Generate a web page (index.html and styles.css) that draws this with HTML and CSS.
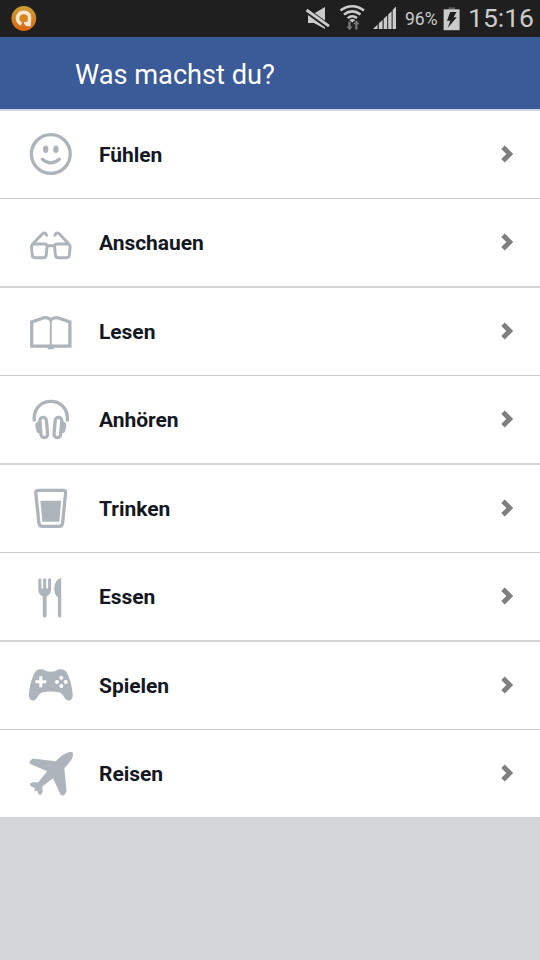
FILE: index.html
```html
<!DOCTYPE html>
<html lang="de">
<head>
<meta charset="utf-8">
<title>Was machst du?</title>
<link rel="stylesheet" href="styles.css">
</head>
<body>
<div class="status">
  <svg class="status-app" viewBox="0 0 48 37">
    <defs><linearGradient id="g" x1="0" y1="0" x2="0" y2="1"><stop offset="0" stop-color="#cca036"/><stop offset="1" stop-color="#d9660f"/></linearGradient></defs>
    <circle cx="23.8" cy="18.5" r="12.4" fill="url(#g)"/>
    <path d="M21.5 24C17.5 22.5 16.5 17.5 18.7 14.8C21 11.6 26.5 11.6 28.8 14.6C30.2 16.8 29.2 20 29.2 24.5C26.8 24.8 25.6 23.4 25.6 21.4" fill="none" stroke="#f5e6cf" stroke-width="3.6"/>
    <circle cx="23.8" cy="18.3" r="3.6" fill="#d7851f"/>
  </svg>
  <svg class="status-icons" viewBox="300 0 102 37">
    <g fill="#cbcbcb">
      <path d="M308 13.5H314L325 7V29L314 23H308Z"/>
      <path d="M306.5 10.5L328.5 26.5" stroke="#1f1f1f" stroke-width="5.4"/>
      <path d="M306.5 10L329 26.2" stroke="#cbcbcb" stroke-width="2.8"/>
      <path d="M373 29L377.5 24.5V29ZM378.8 23.3L382.6 20V29H378.8ZM383.7 18.8L387.2 15.5V29H383.7ZM388.2 14.4L391.6 11.2V29H388.2ZM392.6 10L396 6.5V29H392.6Z"/>
      <g fill="none" stroke="#cbcbcb" stroke-width="2.5"><path d="M340.5 10.4Q352.3 2.2 364 10.4M344 14.5Q352.3 8.2 360.5 14.5M347.7 18.1Q352.3 14.4 357 18.1"/></g>
      <path d="M349.5 19.9Q352.3 18 355.2 19.9L352.3 22.6Z"/>
      <path d="M348.3 21.5H350.7V26.5H352.8L349.5 30.3L346.5 26.5H348.3ZM355.2 29.5H357.5V24.2H359.6L356.4 20.3L353.2 24.2H355.2Z" fill="#777"/>
    </g>
  </svg>
  <span class="pct">96%</span>
  <svg class="battery" viewBox="440 0 24 37"><path d="M448.5 7.3H455V9.5H448.5Z" fill="#5c5c5c"/><path d="M443.6 9.3H459.6V30.2H443.6Z" fill="#cbcbcb"/><path d="M450.2 12H456.5L453.6 17.3H456.8L447.8 27.8L450.3 20.8H447Z" fill="#1f1f1f"/></svg>
  <span class="clock">15:16</span>
</div>
<header class="header"><h1>Was machst du?</h1></header>
<ul class="list">
  <li class="row"><svg class="icon" viewBox="0 111 99 87"><g class="line"><circle cx="50.8" cy="154" r="19.4"/><path d="M42.3 159.2Q50.8 166.5 59.3 159.2" stroke-linecap="round"/></g><ellipse cx="45.7" cy="149.3" rx="2.7" ry="3.8"/><ellipse cx="55.9" cy="149.3" rx="2.7" ry="3.8"/></svg><span>Fühlen</span><svg class="chev" viewBox="0 0 14 20"><path d="M3 3.2L9.8 10L3 16.8"/></svg></li>
  <li class="row"><svg class="icon" viewBox="0 199 99 87"><g class="line thin"><path d="M34.5 244H44.5Q47.3 244 47 247L46.3 254.5Q46 257.8 43 257.8H35.5Q32.4 257.8 32.1 254.5L31.5 247Q31.3 244 34.5 244ZM57.1 244H67.1Q70.3 244 70.1 247L69.5 254.5Q69.2 257.8 66.1 257.8H58.6Q55.6 257.8 55.3 254.5L54.6 247Q54.3 244 57.1 244ZM46.5 245.7H55M32 244.7L42.5 233.8Q44.3 232 45.8 233.6Q46.8 234.8 46.5 236.5M69.6 244.7L59.1 233.8Q57.3 232 55.8 233.6Q54.8 234.8 55.1 236.5"/></g></svg><span>Anschauen</span><svg class="chev" viewBox="0 0 14 20"><path d="M3 3.2L9.8 10L3 16.8"/></svg></li>
  <li class="row"><svg class="icon" viewBox="0 288 99 87"><g class="line"><path d="M31.7 346.2V322L41 318.7Q47.5 316.2 50.8 320Q54.1 316.2 60.6 318.7L69.9 322V346.2Z"/><path d="M50.8 320V347" stroke-width="2"/></g><path d="M46.8 347H54.8L53.5 349.3H48.1Z"/></svg><span>Lesen</span><svg class="chev" viewBox="0 0 14 20"><path d="M3 3.2L9.8 10L3 16.8"/></svg></li>
  <li class="row"><svg class="icon" viewBox="0 376 99 87"><g class="line"><path d="M34.2 421.5V417.5C35 396 66.6 396 67.4 417.5V421.5"/><rect x="40.4" y="417.4" width="6.6" height="20.3" rx="3.3" transform="rotate(-5 43.7 427.5)"/><rect x="54.6" y="417.4" width="6.6" height="20.3" rx="3.3" transform="rotate(5 57.9 427.5)"/></g><path d="M39.3 421.3L41 433.3H39Q36.7 433 36.2 430.5L35.3 425.2Q35.2 421.8 39.3 421.3ZM62.3 421.3L60.6 433.3H62.6Q64.9 433 65.4 430.5L66.3 425.2Q66.4 421.8 62.3 421.3Z"/></svg><span>Anhören</span><svg class="chev" viewBox="0 0 14 20"><path d="M3 3.2L9.8 10L3 16.8"/></svg></li>
  <li class="row"><svg class="icon" viewBox="0 465 99 87"><path class="line" d="M38 490.3H63.5Q65.9 490.3 65.6 493L62.6 523Q62.2 526.4 58.8 526.4H42.8Q39.3 526.4 38.9 523L35.8 493Q35.5 490.3 38 490.3Z"/><path d="M40.4 500.7H61.2L59.3 521.8H42.4Z"/></svg><span>Trinken</span><svg class="chev" viewBox="0 0 14 20"><path d="M3 3.2L9.8 10L3 16.8"/></svg></li>
  <li class="row"><svg class="icon" viewBox="0 553 99 87"><path d="M38.3 579.2Q39.8 577.2 41.3 579.2V588.5H43.2V579.2Q44.7 577.2 46.2 579.2V588.5H48.1V579.2Q49.6 577.2 51.1 579.2V589.5Q51 594 46.6 596.5V616Q44.7 619.3 42.8 616V596.5Q38.3 594 38.3 589.5ZM61.2 579V616Q59.6 619.3 57.9 616V597.3Q54.2 594.5 54.2 588.5Q54.3 579.5 61.2 578Z"/></svg><span>Essen</span><svg class="chev" viewBox="0 0 14 20"><path d="M3 3.2L9.8 10L3 16.8"/></svg></li>
  <li class="row"><svg class="icon" viewBox="0 642 99 87"><path d="M36.5 670.5C39.5 668.8 43 669 45.5 670.8Q50.8 672.5 56.1 670.8C58.6 669 62.1 668.8 65.1 670.5C69 674 72.8 688 72.7 696Q72 700.8 68 700.5C64.5 700 63.5 693.5 59 692.2Q50.8 690.8 42.6 692.2C38.1 693.5 37.1 700 33.6 700.5Q29.6 700.8 28.9 696C28.8 688 32.6 674 36.5 670.5Z"/><g fill="#fff"><path d="M39.3 676.3H42.3V680.3H46.3V683.3H42.3V687.3H39.3V683.3H35.3V680.3H39.3Z"/><circle cx="61.3" cy="677.8" r="2"/><circle cx="61.3" cy="686.1" r="2"/><circle cx="57" cy="682" r="2"/><circle cx="65.6" cy="682" r="2"/></g></svg><span>Spielen</span><svg class="chev" viewBox="0 0 14 20"><path d="M3 3.2L9.8 10L3 16.8"/></svg></li>
  <li class="row"><svg class="icon" viewBox="0 730 99 87"><path d="M72.3 752.3Q74 754.5 71.5 759.5Q69 763.5 64.3 768.3L66.6 791.5L64.3 795Q62 796.3 60.5 794.5L53 778.3L42.3 786.5L42.6 792L40.9 794.7L38.7 794.5L37.3 790.8L34.4 791.2L34.8 788.2L30.2 785.7L30.2 783.5L33 782.2L38 782.5L47.2 771.2L30.5 764Q28.7 762.7 30 761L32.6 758.4L55.8 761.2C61 755.5 68.3 750.5 72.3 752.3Z"/></svg><span>Reisen</span><svg class="chev" viewBox="0 0 14 20"><path d="M3 3.2L9.8 10L3 16.8"/></svg></li>
</ul>
</body>
</html>
```
FILE: styles.css
```css
* { box-sizing: border-box; }
body {
  margin: 0;
  min-height: 960px;
  background: #d2d6d9;
  font-family: Roboto, "Liberation Sans", sans-serif;
}
svg { display: block; flex: none; }
.status {
  display: flex;
  align-items: center;
  height: 37px;
  background: #1f1f1f;
  color: #cbcbcb;
}
.status-app { width: 48px; height: 37px; margin-right: auto; }
.status-icons { width: 102px; height: 37px; }
.pct { width: 38px; padding-left: 3px; font-size: 17.5px; line-height: 37px; padding-top: 1px; }
.battery { width: 24px; height: 37px; }
.clock { width: 76px; padding: 0 0 1px 4px; font-size: 26.5px; line-height: 36px; white-space: nowrap; }
.header {
  display: flex;
  align-items: center;
  height: 74px;
  padding: 3px 0 0 75px;
  background: #3a5a98;
  border-bottom: 2px solid #ced5e5;
}
.header h1 { margin: 0; color: #fff; font-size: 27.2px; font-weight: 400; white-space: nowrap; }
.list { margin: 0; padding: 0; list-style: none; background: #fff; }
.row {
  display: flex;
  align-items: center;
  height: 88px;
  padding-right: 26px;
  border-bottom: 1px solid #cbccce;
  color: #141823;
  font-size: 21px;
  font-weight: 700;
  letter-spacing: -0.04px;
}
.row:nth-child(even) { height: 89px; border-bottom: 2px solid #d3d4d6; }
.row:last-child { height: 87px; border-bottom: 0; }
.icon { width: 99px; height: 87px; fill: #adb4bb; }
.line { fill: none; stroke: #adb4bb; stroke-width: 3.3; }
.thin { stroke-width: 2.9; }
.chev { width: 14px; height: 20px; margin: 0 0 1px auto; fill: none; stroke: #7f7f7f; stroke-width: 4.8; }
```
